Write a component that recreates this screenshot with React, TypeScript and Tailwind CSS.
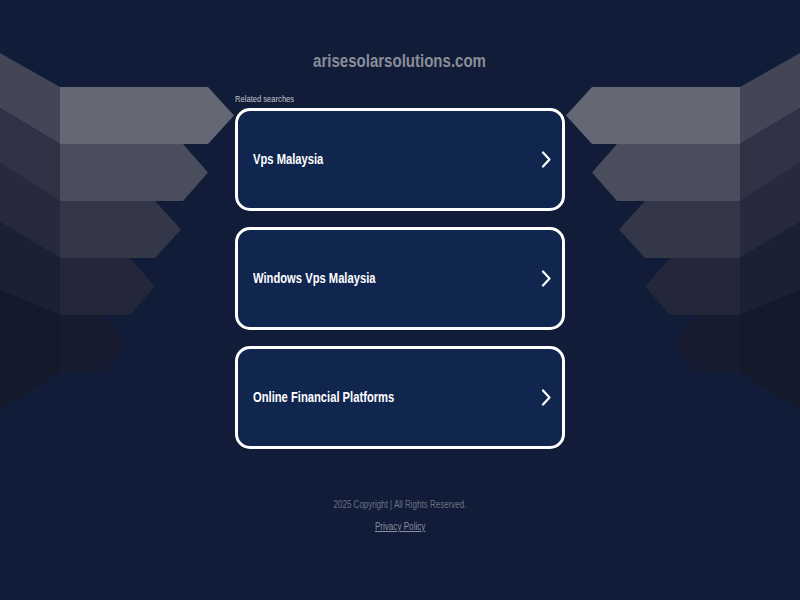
import React from "react";

const fontStack = '"Liberation Sans", Arial, sans-serif';

function Wing({ className }: { className?: string }) {
  const rows = [
    { t: 87, b: 144, r: 208, tip: 234, front: "#646875", face: "#434656", lt: 53, lb: 108 },
    { t: 144, b: 201, r: 183, tip: 208, front: "#4a4d5c", face: "#303345", lt: 108, lb: 163 },
    { t: 201, b: 258, r: 155, tip: 181, front: "#343747", face: "#262a3c", lt: 163, lb: 222 },
    { t: 258, b: 315, r: 130, tip: 155, front: "#232739", face: "#1c2033", lt: 222, lb: 290 },
    { t: 315, b: 372, r: 103, tip: 127, front: "#161b2f", face: "#141a2c", lt: 290, lb: 410 },
  ];
  return (
    <svg className={className} width="240" height="420" viewBox="0 0 240 420">
      {rows.map((r, i) => {
        const m = (r.t + r.b) / 2;
        return (
          <g key={i}>
            <polygon points={`0,${r.lt} 60,${r.t} 60,${r.b} 0,${r.lb}`} fill={r.face} />
            <polygon
              points={`60,${r.t} ${r.r},${r.t} ${r.tip},${m} ${r.r},${r.b} 60,${r.b}`}
              fill={r.front}
            />
          </g>
        );
      })}
    </svg>
  );
}

function Chevron() {
  return (
    <svg width="10" height="17" viewBox="0 0 10 17" fill="none">
      <polyline points="2,1.5 8.5,8.5 2,15.5" stroke="white" strokeWidth="2.2" strokeLinecap="round" strokeLinejoin="round" />
    </svg>
  );
}

function Card({ label }: { label: string }) {
  return (
    <a
      href="#"
      className="flex h-[103px] w-[330px] items-center justify-between rounded-[15px] border-[3px] border-white bg-[#10264f] pl-[15px] pr-[11px] text-[14px] font-bold text-white"
    >
      <span className="inline-block origin-left scale-x-[0.8] whitespace-nowrap">{label}</span>
      <Chevron />
    </a>
  );
}

export default function App() {
  return (
    <div
      className="relative min-h-screen w-full overflow-hidden bg-[#101c38]"
      style={{ fontFamily: fontStack }}
    >
      <Wing className="absolute left-0 top-0" />
      <Wing className="absolute right-0 top-0 -scale-x-100" />
      <div className="relative flex flex-col items-center">
        <h1 className="pt-[49px] text-[18px] font-bold leading-[24px] text-[#8a8d97]">
          <span className="inline-block scale-x-[0.835]">arisesolarsolutions.com</span>
        </h1>
        <div className="mt-[20px] w-[330px]">
          <div className="text-[9.5px] leading-[12px] text-[#c2c6ce]">
            <span className="inline-block origin-left scale-x-[0.8] whitespace-nowrap">Related searches</span>
          </div>
          <div className="mt-[3px] flex flex-col gap-[16px]">
            <Card label="Vps Malaysia" />
            <Card label="Windows Vps Malaysia" />
            <Card label="Online Financial Platforms" />
          </div>
        </div>
        <div className="mt-[49px] text-[10px] leading-[14px] text-[#6c7283]">
          <span className="inline-block scale-x-[0.8] whitespace-nowrap">2025 Copyright | All Rights Reserved.</span>
        </div>
        <a href="#" className="mt-[8px] text-[10px] leading-[14px] text-[#8a8f9c] underline">
          <span className="inline-block scale-x-[0.81] whitespace-nowrap underline">Privacy Policy</span>
        </a>
      </div>
    </div>
  );
}
